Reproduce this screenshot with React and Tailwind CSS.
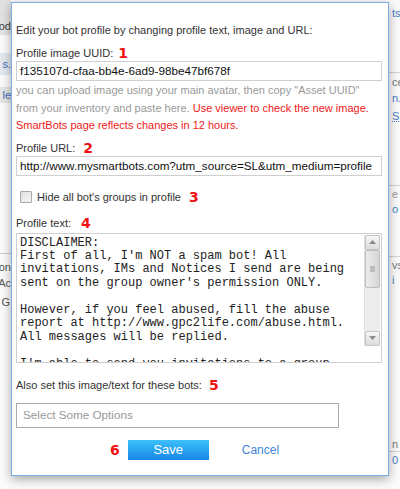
import React from "react";

const lab = "text-[11px] leading-[16px] text-[#333]";
const num = "font-['DejaVu_Sans'] font-bold text-[14px] leading-[16px] text-[#f01010]";

function Num({ n, className = "" }) {
  return <span className={`${num} ${className}`}>{n}</span>;
}

function Scrollbar() {
  return (
    <div className="absolute right-[1px] top-[1px] w-[16px] h-[111px] flex flex-col bg-[#ececec] border-l border-[#e0e0e0]">
      <div className="h-[15px] flex items-center justify-center bg-gradient-to-b from-[#f6f6f6] to-[#dcdcdc] border border-[#c4c4c4] rounded-[2px]">
        <svg width="7" height="4" viewBox="0 0 7 4"><path d="M0 4 L3.5 0 L7 4 Z" fill="#8a8a8a" /></svg>
      </div>
      <div className="h-[38px] flex items-center justify-center bg-gradient-to-r from-[#ececec] to-[#d6d6d6] border border-[#bdbdbd] rounded-[2px]">
        <svg width="5" height="6" viewBox="0 0 5 6"><path d="M0 1h5M0 3h5M0 5h5" stroke="#9a9a9a" strokeWidth="1" /></svg>
      </div>
      <div className="flex-1" />
      <div className="h-[15px] flex items-center justify-center bg-gradient-to-b from-[#f6f6f6] to-[#dcdcdc] border border-[#c4c4c4] rounded-[2px]">
        <svg width="7" height="4" viewBox="0 0 7 4"><path d="M0 0 L3.5 4 L7 0 Z" fill="#8a8a8a" /></svg>
      </div>
    </div>
  );
}

const profileText = `DISCLAIMER:
First of all, I'm NOT a spam bot! All
invitations, IMs and Notices I send are being
sent on the group owner's permission ONLY.

However, if you feel abused, fill the abuse
report at http://www.gpc2life.com/abuse.html.
All messages will be replied.

I'm able to send you invitations to a group`;

function LeftStrip() {
  return (
    <div className="w-[11px] shrink-0 flex flex-col overflow-hidden text-[11px] leading-[14px]">
      <div className="h-[35px] bg-[#e2e2e2] flex items-end justify-end pb-[2px] text-[#444] whitespace-nowrap">od</div>
      <div className="h-[18px]" />
      <div className="h-[22px] bg-[#e3e8ef] flex items-center justify-end text-[#3b6fb8] whitespace-nowrap">s.</div>
      <div className="h-[12px]" />
      <div className="h-[16px] bg-[#e6e6e6] flex items-center justify-end text-[#3b6fb8] whitespace-nowrap">le</div>
      <div className="h-[150px]" />
      <div className="h-[1px] bg-[#cfcfcf]" />
      <div className="mt-[6px] h-[14px] flex justify-end text-[#555] whitespace-nowrap">on</div>
      <div className="mt-[2px] h-[14px] flex justify-end text-[#555] whitespace-nowrap">Ac</div>
      <div className="mt-[5px] h-[14px] flex justify-end pr-[1px] text-[#555] whitespace-nowrap">G</div>
    </div>
  );
}

function RightStrip() {
  return (
    <div className="w-[11px] shrink-0 flex flex-col overflow-hidden text-[11px] leading-[14px] pl-[3px] whitespace-nowrap">
      <div className="mt-[6px] h-[14px] text-[#4a80c6]">ts</div>
      <div className="mt-[52px] h-[1px] bg-[#d4d4d4] -ml-[3px]" />
      <div className="mt-[2px] h-[14px] text-[#777]">ce</div>
      <div className="mt-[2px] h-[14px] text-[#4a80c6]">n.</div>
      <div className="mt-[4px] h-[14px] text-[#4a80c6] underline decoration-dotted">S</div>
      <div className="mt-[62px] h-[1px] bg-[#d4d4d4] -ml-[3px]" />
      <div className="mt-[1px] h-[14px] text-[#999]">e</div>
      <div className="mt-[1px] h-[14px] text-[#4a80c6]">o</div>
      <div className="mt-[40px] h-[1px] bg-[#d4d4d4] -ml-[3px]" />
      <div className="mt-[1px] h-[14px] text-[#777]">vs</div>
      <div className="mt-[1px] h-[14px] text-[#4a80c6]">i</div>
      <div className="mt-[150px] h-[14px] text-[#777]">n</div>
      <div className="h-[1px] bg-[#d4d4d4] -ml-[3px]" />
      <div className="mt-[1px] h-[14px] text-[#4a80c6]">0</div>
    </div>
  );
}

export default function App() {
  return (
    <div className="w-[400px] h-[489px] overflow-hidden bg-[#fbfbfb] flex font-['Liberation_Sans',Arial,sans-serif]">
      <LeftStrip />
      <div className="relative z-10 w-[378px] h-[474px] mt-[2px] shrink-0 bg-white border border-[#7eaee4] shadow-[0_3px_10px_rgba(0,0,0,0.35)] flex flex-col px-[4px] pt-[19px]">
        <div className={lab}>Edit your bot profile by changing profile text, image and URL:</div>

        <div className="mt-[7px] flex items-center h-[16px]">
          <span className={lab}>Profile image UUID:</span>
          <Num n="1" className="ml-[5px]" />
        </div>
        <div className="w-[366px] h-[20px] border border-[#cfcfcf] flex items-center pl-[3px] text-[11.7px] text-[#111]">
          f135107d-cfaa-bb4e-6ad9-98be47bf678f
        </div>
        <div className="mt-[1px] text-[11px] leading-[17.5px] text-[#9a9a9a]">
          you can upload image using your main avatar, then copy "Asset UUID"<br />
          from your inventory and paste here. <span className="text-[#f01818]">Use viewer to check the new image.</span><br />
          <span className="text-[#f01818]">SmartBots page reflects changes in 12 hours.</span>
        </div>

        <div className="mt-[5px] flex items-center h-[16px]">
          <span className={lab}>Profile URL:</span>
          <Num n="2" className="ml-[8px]" />
        </div>
        <div className="w-[366px] h-[20px] border border-[#cfcfcf] flex items-center pl-[3px] text-[11.7px] text-[#111] whitespace-nowrap overflow-hidden">
          http://www.mysmartbots.com?utm_source=SL&amp;utm_medium=profile
        </div>

        <div className="mt-[13px] flex items-center h-[16px]">
          <span className="ml-[4px] w-[12px] h-[12px] border border-[#a9a9a9] bg-gradient-to-br from-[#dedede] to-[#f7f7f7] rounded-[1px]" />
          <span className={`${lab} ml-[5px]`}>Hide all bot's groups in profile</span>
          <Num n="3" className="ml-[8px]" />
        </div>

        <div className="mt-[10px] flex items-center h-[16px]">
          <span className={lab}>Profile text:</span>
          <Num n="4" className="ml-[10px]" />
        </div>
        <div className="relative mt-[2px] w-[366px] h-[130px] border border-[#cfcfcf] overflow-hidden">
          <pre className="pl-[3px] pt-[3px] font-['Liberation_Mono',monospace] text-[12px] leading-[13.45px] text-[#222] whitespace-pre">{profileText}</pre>
          <Scrollbar />
        </div>

        <div className="mt-[14px] flex items-center h-[16px]">
          <span className={lab}>Also set this image/text for these bots:</span>
          <Num n="5" className="ml-[7px]" />
        </div>
        <div className="mt-[10px] w-[323px] h-[25px] border border-[#aaaaaa] flex items-center pl-[6px] text-[11.7px] text-[#999]">
          Select Some Options
        </div>

        <div className="mt-[12px] flex items-center h-[20px]">
          <Num n="6" className="ml-[94px]" />
          <div className="ml-[8px] w-[81px] h-[20px] bg-gradient-to-b from-[#3cc0fb] to-[#1a86e6] flex items-center justify-center text-white text-[13px]">
            Save
          </div>
          <span className="ml-[33px] text-[12px] text-[#3f86d8]">Cancel</span>
        </div>
      </div>
      <RightStrip />
    </div>
  );
}
